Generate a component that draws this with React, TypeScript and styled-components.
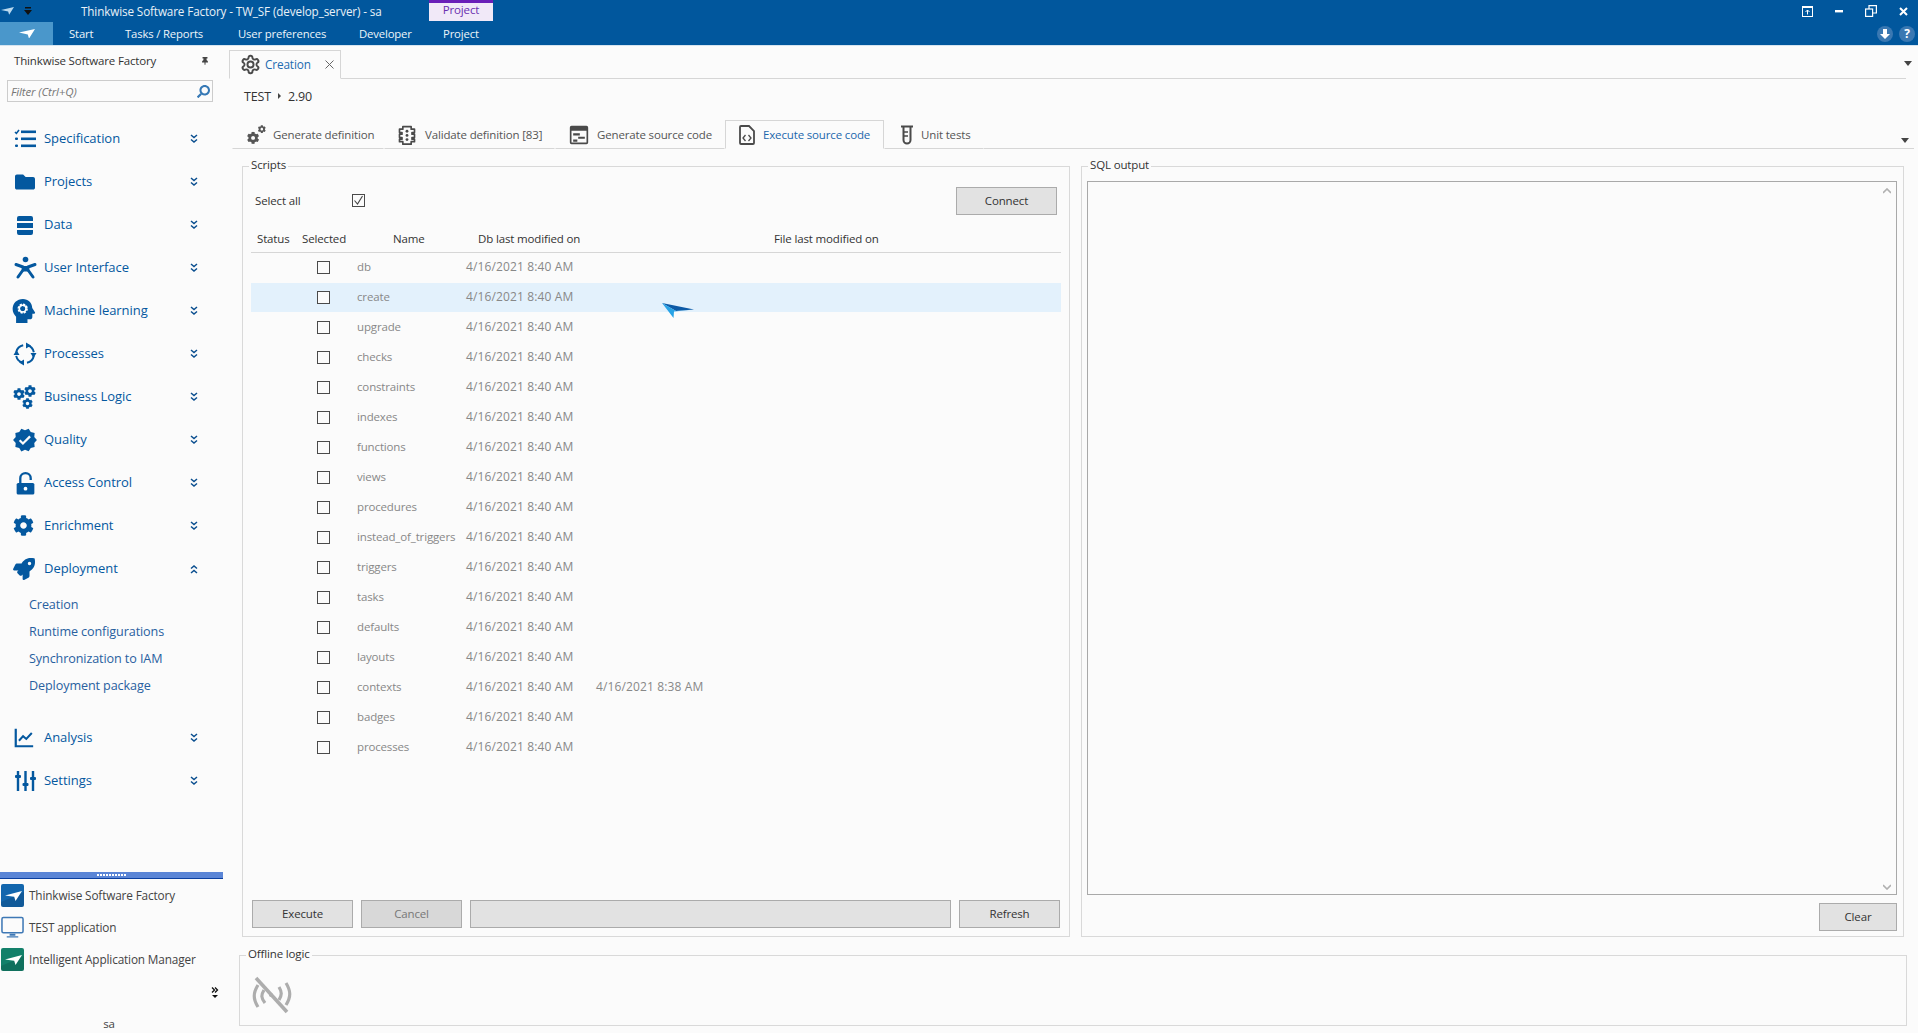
import React from "react";
import styled, { createGlobalStyle } from "styled-components";
import { FaCog, FaFolder, FaRocket, FaSearch, FaThumbtack } from "react-icons/fa";
import { MdVerified } from "react-icons/md";

const UI = `"Open Sans", "Noto Sans", "Liberation Sans", sans-serif`;
const BLUE = "#01579d";
const NAVY = "#04589f";

const Global = createGlobalStyle`
  html, body { margin: 0; padding: 0; background: #fbfbfb; overflow: hidden; }
  * { box-sizing: border-box; }
`;

const Shell = styled.div`
  width: 1918px; height: 1033px; display: flex; flex-direction: column;
  background: #fbfbfb; font-family: ${UI}; font-size: 11.5px; letter-spacing: -0.15px; color: #333;
`;
const TitleBar = styled.header`
  height: 46px; flex: none; background: ${BLUE}; border-bottom: 1px solid #d5e4f0; color: #fff;
  display: flex; flex-direction: column;
`;
const TopRow = styled.div`height: 22px; display: flex; align-items: stretch;`;
const QuickTools = styled.div`
  width: 81px; flex: none; display: flex; align-items: center; gap: 10px; padding-left: 1px;
`;
const TitleText = styled.div`
  width: 348px; flex: none; line-height: 22px; color: #e8f1f8; white-space: nowrap; font-size: 11.7px; letter-spacing: -0.12px;
`;
const ContextTab = styled.div`
  width: 64px; height: 21px; flex: none; background: #f1e9f8; border-top: 3px solid #6a1fb8; color: #6a2fb0;
  text-align: center; line-height: 14px;
`;
const WindowButtons = styled.div`margin: 0 -1px 0 auto; display: flex;`;
const WindowBtn = styled.div`width: 32px; display: flex; align-items: center; justify-content: center;`;
const MenuRow = styled.nav`height: 23px; display: flex; align-items: center;`;
const AppButton = styled.div`
  width: 53px; height: 100%; background: #4a97cb; display: flex; align-items: center; justify-content: center; margin-right: 16px;
`;
const MenuItem = styled.div<{ $w: number }>`
  width: ${(p) => p.$w}px; flex: none; color: #eef5fa; white-space: nowrap; font-size: 11.3px;
`;
const RoundButtons = styled.div`margin-left: auto; display: flex; gap: 6px; padding-right: 3px;`;
const RoundBtn = styled.div`
  width: 16px; height: 16px; border-radius: 50%; background: #3a78b2; display: flex; align-items: center;
  justify-content: center; color: #fff; font-weight: 700; font-size: 12px; letter-spacing: 0;
`;

const Body = styled.div`flex: 1; min-height: 0; display: flex;`;
const Sidebar = styled.aside`width: 229px; flex: none; display: flex; flex-direction: column;`;
const SideHeader = styled.div`
  height: 31px; flex: none; display: flex; align-items: center; justify-content: space-between;
  padding: 0 20px 2px 14px; color: #333;
`;
const Filter = styled.div`
  margin: 3px 0 0 7px; width: 206px; height: 22px; flex: none; border: 1px solid #ccc; background: #fbfbfb;
  display: flex; align-items: center; justify-content: space-between; padding: 0 2px 0 3px;
  font-style: italic; color: #777;
`;
const SearchGlyph = styled.span`display: flex; transform: scaleX(-1);`;
const Nav = styled.div`margin-top: 15px; display: flex; flex-direction: column;`;
const NavRow = styled.div`
  height: 43px; display: flex; align-items: center; color: ${NAVY}; font-size: 13px; font-weight: 500; letter-spacing: -0.05px;
`;
const NavIconBox = styled.span`
  width: 44px; padding-left: 13px; flex: none; display: flex; align-items: center; color: ${NAVY};
`;
const NavLabel = styled.span`width: 146px; flex: none; padding-bottom: 1px;`;
const SubList = styled.div`margin-top: 1px; display: flex; flex-direction: column;`;
const SubRow = styled.div`
  height: 27px; display: flex; align-items: center; padding-left: 29px; color: #28609f; font-size: 12.6px; letter-spacing: -0.1px;
`;
const NavGap = styled.div`height: 17px;`;
const SideBottom = styled.div`margin-top: auto; display: flex; flex-direction: column;`;
const Splitter = styled.div`
  width: 223px; height: 7px; background: #5a85d6; border-bottom: 1px solid #0a3fa0; display: flex;
  align-items: center; justify-content: center; gap: 1px;
`;
const SplitDot = styled.i`width: 2px; height: 2px; background: #fff; display: block;`;
const LaunchRow = styled.div`
  height: 32px; display: flex; align-items: center; padding-left: 1px; color: #444; gap: 5px; font-size: 11.8px;
`;
const Overflow = styled.div`height: 34px; display: flex; justify-content: flex-end; align-items: center; padding-right: 10px;`;
const UserName = styled.div`height: 24px; padding-top: 7px; line-height: 16px; text-align: center; width: 218px; color: #444;`;

const Main = styled.main`flex: 1; min-width: 0; display: flex; flex-direction: column;`;
const DocBar = styled.div`
  height: 33px; flex: none; margin-right: 12px; border-bottom: 1px solid #d6d6d6; display: flex; align-items: flex-end;
  position: relative;
`;
const DocTab = styled.div`
  width: 112px; height: 29px; margin-bottom: -1px; background: #fbfbfb; border: 1px solid #d6d6d6; border-bottom-color: #fbfbfb;
  display: flex; align-items: center; padding-left: 10px; gap: 4px; color: #1d6bb0; font-size: 11.8px;
`;
const DocLabel = styled.span`padding-bottom: 2px;`;
const DocClose = styled.span`margin-left: 10px; display: flex; color: #666;`;
const Caret = styled.span<{ $r: number; $b: number }>`
  position: absolute; right: ${(p) => p.$r}px; bottom: ${(p) => p.$b}px; width: 0; height: 0;
  border-left: 4px solid transparent; border-right: 4px solid transparent; border-top: 5px solid #444;
`;
const Crumb = styled.div`
  height: 35px; flex: none; display: flex; align-items: center; padding: 0 0 1px 15px; gap: 7px; color: #333; font-size: 12.5px;
`;
const CrumbArrow = styled.span`
  width: 0; height: 0; border-top: 3px solid transparent; border-bottom: 3px solid transparent; border-left: 3px solid #444;
`;
const SubTabs = styled.div`
  height: 35px; flex: none; margin: 0 4px 0 3px; border-bottom: 1px solid #d6d6d6; display: flex; align-items: flex-end; position: relative;
`;
const SubTab = styled.div<{ $w: number; $active?: boolean; $pad?: number; $gap?: number }>`
  width: ${(p) => p.$w}px; height: 29px; flex: none; display: flex; align-items: center; gap: ${(p) => p.$gap ?? 8}px;
  padding-left: ${(p) => p.$pad ?? 13}px; color: ${(p) => (p.$active ? "#1c68ad" : "#555")};
  margin-bottom: -1px; background: #fbfbfb; white-space: nowrap;
  border: 1px solid ${(p) => (p.$active ? "#d6d6d6" : "transparent")};
  border-bottom: 1px solid ${(p) => (p.$active ? "#fbfbfb" : "#d6d6d6")};
`;
const Groups = styled.div`
  flex: 1; min-height: 0; margin: 9px 0 0 13px; display: flex; gap: 11px;
`;
const Group = styled.fieldset<{ $w: number }>`
  margin: 0; padding: 0; min-width: 0; width: ${(p) => p.$w}px; flex: none; border: 1px solid #d9d9d9;
  display: flex; flex-direction: column;
`;
const Legend = styled.legend`
  margin-left: 6px; padding: 0 2px 2px; line-height: 14px; color: #333; font-size: 11.5px;
`;
const SelectBar = styled.div`
  height: 28px; margin: 13px 12px 0 12px; display: flex; align-items: center;
`;
const SelectLabel = styled.span`width: 97px; flex: none; color: #333; padding-bottom: 2px;`;
const Check = styled.span`
  width: 13px; height: 13px; flex: none; border: 1px solid #4a4a4a; background: #fbfbfb; display: flex;
  align-items: center; justify-content: center;
`;
const SelectAllCheck = styled(Check)`margin-bottom: 2px;`;
const Button = styled.div<{ $w?: number; $off?: boolean; $grow?: boolean }>`
  ${(p) => (p.$w ? `width: ${p.$w}px;` : "")} ${(p) => (p.$grow ? "flex: 1;" : "flex: none;")}
  height: 28px; border: 1px solid #ababab; background: ${(p) => (p.$off ? "#d8d8d8" : "#e2e2e2")}; padding-bottom: 2px;
  color: ${(p) => (p.$off ? "#777" : "#333")}; display: flex; align-items: center; justify-content: center;
`;
const ConnectSlot = styled.div`margin-left: auto;`;
const Table = styled.div`margin: 11px 8px 0 8px; display: flex; flex-direction: column;`;
const GRID = "45px 55px 110px 130px 1fr";
const HeadRow = styled.div`
  height: 27px; display: grid; grid-template-columns: ${GRID}; align-items: center; border-bottom: 1px solid #d6d6d6; color: #333;
  padding-bottom: 2px;
`;
const HeadCell = styled.span<{ $pad: number }>`padding-left: ${(p) => p.$pad}px; white-space: nowrap;`;
const Row = styled.div<{ $hover?: boolean }>`
  height: 30px; display: grid; grid-template-columns: ${GRID}; align-items: center; color: #888; position: relative;
  padding-bottom: 1px; background-clip: content-box; background-color: ${(p) => (p.$hover ? "#e3f1fc" : "transparent")};
`;
const CheckCell = styled.span`display: flex; justify-content: center;`;
const TextCell = styled.span`padding: 0 0 2px 6px; white-space: nowrap;`;
const DateCell = styled(TextCell)`padding-left: 5px; font-size: 12px; letter-spacing: 0.13px;`;
const Cursor = styled.svg`position: absolute; left: 411px; top: 20px;`;
const ScriptActions = styled.div`margin: auto 9px 8px 9px; display: flex; gap: 8px;`;
const SqlBody = styled.div`flex: 1; min-height: 0; margin: 7px 6px 5px 5px; display: flex; flex-direction: column;`;
const SqlArea = styled.div`flex: 1; border: 1px solid #a9a9a9; position: relative; margin-bottom: 8px;`;
const ScrollMark = styled.svg<{ $bottom?: boolean }>`
  position: absolute; right: 5px; ${(p) => (p.$bottom ? "bottom: 4px;" : "top: 6px;")}
`;
const ClearSlot = styled.div`display: flex; justify-content: flex-end;`;
const OfflineWrap = styled.div`margin: 10px 0 7px 10px;`;
const OfflineBox = styled.fieldset`
  margin: 0; padding: 12px 0 0 0; height: 79px; width: 1668px; min-width: 0; border: 1px solid #d9d9d9; display: block;
`;
const OfflineIcon = styled.div`margin-left: 11px; display: flex;`;
const IconSlot = styled.span<{ $m?: string }>`display: flex; margin: ${(p) => p.$m ?? "0"};`;

const Ico = ({ children, w = 24, h = 24 }: { children: React.ReactNode; w?: number; h?: number }) => (
  <svg width={w} height={h} viewBox="0 0 24 24" fill="currentColor">{children}</svg>
);

const Icons: Record<string, React.ReactNode> = {
  spec: (
    <Ico>
      <rect x="8" y="3.5" width="15" height="2.6" />
      <rect x="8" y="10.5" width="15" height="2.6" />
      <rect x="8" y="17.5" width="15" height="2.6" />
      <path d="M2 5l1.4 1.4L6 3" fill="none" stroke="currentColor" strokeWidth="1.6" />
      <rect x="2" y="10.5" width="3" height="2.6" rx="1" />
      <rect x="2" y="17.5" width="3" height="2.6" rx="1" />
    </Ico>
  ),
  folder: <IconSlot $m="0 0 0 2px"><FaFolder size={20} /></IconSlot>,
  data: (
    <Ico>
      <path d="M4 5a2 2 0 0 1 2-2h12a2 2 0 0 1 2 2v3H4zM4 10h16v5H4zM4 17h16v3a2 2 0 0 1-2 2H6a2 2 0 0 1-2-2z" />
    </Ico>
  ),
  ui: (
    <Ico>
      <circle cx="12.5" cy="3.500" r="2.800" />
      <path d="M3 8.500l7 2.500v3l-5 7M22 8.500l-7 2.500v3l5 7" fill="none" stroke="currentColor" strokeWidth="3" strokeLinecap="round" strokeLinejoin="round" />
      <path d="M9.500 10h6v5.500h-6z" />
    </Ico>
  ),
  ml: (
    <IconSlot $m="0 -2px">
      <svg width="26" height="26" viewBox="0 0 24 24">
        <path fill="currentColor" d="M11 1C5.500 1 1.500 5 1.500 10.200c0 3.100 1.300 5.300 3.200 7V23h10.500v-3.300h2.300c1.300 0 2.200-.9 2.200-2.200v-3h1.600c.8 0 1.200-.8.800-1.400l-2.500-3.900C19.400 4.500 15.800 1 11 1z" />
        <circle cx="10.800" cy="9.800" r="3.600" fill="none" stroke="#fff" strokeWidth="2.4" strokeDasharray="1.800 1.000" />
        <circle cx="10.800" cy="9.800" r="3.100" fill="none" stroke="#fff" strokeWidth="1.300" />
      </svg>
    </IconSlot>
  ),
  proc: (
    <Ico>
      <circle cx="12" cy="12" r="9" fill="none" stroke="currentColor" strokeWidth="2" strokeDasharray="10 4.14" strokeDashoffset="-2" />
      <path d="M13 .5l5 3-5 3zM23.500 11l-3 5-3-5zM11 23.500l-5-3 5-3zM.5 13l3-5 3 5z" />
    </Ico>
  ),
  logic: (
    <Ico>
      <FaCog x="0" y="3" size={12} />
      <FaCog x="11" y="0" size={12} />
      <FaCog x="9" y="13" size={11} />
    </Ico>
  ),
  quality: <IconSlot $m="0 -1px"><MdVerified size={26} /></IconSlot>,
  lock: (
    <Ico w={25} h={26}>
      <path d="M5 12h14a1.500 1.500 0 0 1 1.500 1.500v8A1.500 1.500 0 0 1 19 23H5a1.500 1.500 0 0 1-1.500-1.500v-8A1.500 1.500 0 0 1 5 12z" />
      <path d="M7 12V7.500a5 5 0 0 1 10 0V9" fill="none" stroke="currentColor" strokeWidth="2.200" />
      <circle cx="12" cy="17.500" r="1.800" fill="#fff" />
    </Ico>
  ),
  gear: <IconSlot><FaCog size={21} /></IconSlot>,
  rocket: <IconSlot><FaRocket size={22} /></IconSlot>,
  chart: (
    <Ico w={22} h={22}>
      <path d="M3 2v19h19" fill="none" stroke="currentColor" strokeWidth="2.400" />
      <path d="M6.500 15l4.500-5 3.500 3 6-6.500" fill="none" stroke="currentColor" strokeWidth="2.200" />
    </Ico>
  ),
  sliders: (
    <Ico>
      <path d="M5 2v20M12.500 2v20M20 2v20" stroke="currentColor" strokeWidth="2.400" />
      <rect x="2" y="6" width="6" height="3" rx="1" />
      <rect x="9.500" y="14" width="6" height="3" rx="1" />
      <rect x="17" y="8" width="6" height="3" rx="1" />
    </Ico>
  ),
};

const ChevronSvg = styled.svg<{ $up?: boolean }>`${(p) => (p.$up ? "transform: rotate(180deg);" : "")}`;
const DoubleChevron = ({ up }: { up?: boolean }) => (
  <ChevronSvg $up={up} width="8" height="10" viewBox="0 0 8 10">
    <path d="M1 1l3 2.500L7 1M1 5.500L4 8l3-2.500" fill="none" stroke="#0a4e8f" strokeWidth="1.500" />
  </ChevronSvg>
);

const PlaneLogo = ({ size = 16, fill = "#fff" }: { size?: number; fill?: string }) => (
  <svg width={size} height={size * 0.6} viewBox="0 0 20 12">
    <path d="M0 4.500L20 0l-7.500 12-1.500-5z" fill={fill} />
  </svg>
);

const AppTile = ({ bg }: { bg: string }) => (
  <svg width="23" height="23" viewBox="0 0 23 23">
    <rect width="23" height="23" rx="2" fill={bg} />
    <path d="M0 18L23 8v13a2 2 0 0 1-2 2H2a2 2 0 0 1-2-2z" fill="#000" opacity="0.12" />
    <path d="M4 11.500L21 7l-6.500 10-1.300-4.300z" fill="#fff" />
  </svg>
);

const MonitorTile = () => (
  <svg width="23" height="23" viewBox="0 0 24 23">
    <rect x="1" y="1" width="22" height="16" rx="1.500" fill="none" stroke="#3e78b5" strokeWidth="1.600" />
    <path d="M9 18h6v2H9zM6 20.500h12V22H6z" fill="#3e78b5" />
  </svg>
);

const GrayGears = () => (
  <svg width="20" height="20" viewBox="0 0 24 24" fill="#4a4a4a">
    <FaCog x="1" y="8" size={15} />
    <FaCog x="14" y="0" size={10} />
  </svg>
);
const Validate = () => (
  <svg width="20" height="20" viewBox="0 0 24 24">
    <path d="M7 2h10v3h4v4h-3v2h3v4h-3v2h3v3h-4v3H7v-3H3v-3h3v-2H3v-4h3V9H3V5h4z" fill="none" stroke="#4a4a4a" strokeWidth="2" strokeLinejoin="round" />
    <circle cx="12" cy="7.500" r="1.700" fill="#4a4a4a" />
    <circle cx="12" cy="12.500" r="1.700" fill="#4a4a4a" />
    <circle cx="12" cy="17.500" r="1.700" fill="#4a4a4a" />
  </svg>
);
const SourceWin = () => (
  <svg width="20" height="20" viewBox="0 0 24 24" fill="#4a4a4a">
    <path fillRule="evenodd" d="M3 1h18a2 2 0 0 1 2 2v18a2 2 0 0 1-2 2H3a2 2 0 0 1-2-2V3a2 2 0 0 1 2-2zm0 6v14h18V7z" />
    <path d="M5 10h8v2.500H5zM11 14h8v2.500h-8zM5 17.500h5V20H5z" />
  </svg>
);
const FileCode = () => (
  <svg width="16" height="20" viewBox="0 0 16 20" fill="none" stroke="#4a4a4a" strokeWidth="1.800">
    <path d="M2 1h8l5 5v12a1 1 0 0 1-1 1H2a1 1 0 0 1-1-1V2a1 1 0 0 1 1-1z" />
    <path d="M6.500 10L4 13l2.500 3M9.500 10L12 13l-2.500 3" strokeWidth="1.300" />
  </svg>
);
const TestTube = () => (
  <svg width="12" height="20" viewBox="0 0 12 20" fill="none" stroke="#4a4a4a" strokeWidth="2">
    <path d="M0 1.500h12M2.500 1.500V15a3.500 3.500 0 0 0 7 0V1.500" />
    <path d="M3 7h4M3 11h4" strokeWidth="1.600" />
  </svg>
);
const CreationGear = () => (
  <svg width="21" height="21" viewBox="0 0 24 24" fill="none" stroke="#4a4a4a" strokeWidth="2.200" strokeLinecap="round" strokeLinejoin="round">
    <path d="M12.220 2h-.44a2 2 0 0 0-2 2v.18a2 2 0 0 1-1 1.730l-.43.250a2 2 0 0 1-2 0l-.15-.080a2 2 0 0 0-2.730.730l-.22.380a2 2 0 0 0 .730 2.730l.15.100a2 2 0 0 1 1 1.720v.510a2 2 0 0 1-1 1.740l-.15.090a2 2 0 0 0-.730 2.730l.22.380a2 2 0 0 0 2.730.730l.15-.080a2 2 0 0 1 2 0l.43.250a2 2 0 0 1 1 1.730V20a2 2 0 0 0 2 2h.44a2 2 0 0 0 2-2v-.18a2 2 0 0 1 1-1.730l.43-.250a2 2 0 0 1 2 0l.15.080a2 2 0 0 0 2.730-.730l.22-.390a2 2 0 0 0-.730-2.730l-.15-.080a2 2 0 0 1-1-1.740v-.500a2 2 0 0 1 1-1.740l.15-.090a2 2 0 0 0 .730-2.730l-.22-.380a2 2 0 0 0-2.730-.730l-.15.080a2 2 0 0 1-2 0l-.43-.250a2 2 0 0 1-1-1.730V4a2 2 0 0 0-2-2z" />
    <circle cx="12" cy="12" r="3.500" />
  </svg>
);
const NoSignal = () => (
  <svg width="42" height="40" viewBox="0 0 42 40" fill="none" stroke="#adadad" strokeWidth="3.200">
    <path d="M5 3l31 34" strokeWidth="3.600" />
    <path d="M7 10c-5 8-5 14 0 22M13 15c-3 5-3 8 1 13M35 8c5 8 5 14 0 22M28 12c3 5 3 8 0 13" />
    <circle cx="20" cy="20" r="2" fill="#adadad" stroke="none" />
  </svg>
);

const navTop = [
  ["spec", "Specification"], ["folder", "Projects"], ["data", "Data"], ["ui", "User Interface"],
  ["ml", "Machine learning"], ["proc", "Processes"], ["logic", "Business Logic"], ["quality", "Quality"],
  ["lock", "Access Control"], ["gear", "Enrichment"],
];
const scripts = [
  "db", "create", "upgrade", "checks", "constraints", "indexes", "functions", "views", "procedures",
  "instead_of_triggers", "triggers", "tasks", "defaults", "layouts", "contexts", "badges", "processes",
];

const NavItem = ({ icon, label, up }: { icon: string; label: string; up?: boolean }) => (
  <NavRow>
    <NavIconBox>{Icons[icon]}</NavIconBox>
    <NavLabel>{label}</NavLabel>
    <DoubleChevron up={up} />
  </NavRow>
);

export default function App() {
  return (
    <Shell>
      <Global />
      <TitleBar>
        <TopRow>
          <QuickTools>
            <PlaneLogo size={13} fill="#b9d8ee" />
            <svg width="8" height="8" viewBox="0 0 8 8" fill="#111"><path d="M1 0h6v1.500H1zM0 3h8L4 8z" /></svg>
          </QuickTools>
          <TitleText>Thinkwise Software Factory - TW_SF (develop_server) - sa</TitleText>
          <ContextTab>Project</ContextTab>
          <WindowButtons>
            <WindowBtn>
              <svg width="11" height="11" viewBox="0 0 11 11" fill="none" stroke="#fff"><rect x=".5" y=".5" width="10" height="10" /><path d="M.5 1.500h10M5.500 8.500V4M3.500 6l2-2 2 2" /></svg>
            </WindowBtn>
            <WindowBtn><svg width="8" height="3" viewBox="0 0 8 3"><rect width="8" height="2.400" fill="#fff" /></svg></WindowBtn>
            <WindowBtn>
              <svg width="12" height="12" viewBox="0 0 12 12" fill="none" stroke="#fff" strokeWidth="1.200"><rect x=".6" y="4" width="7" height="7.400" /><path d="M4 4V.6h7.400V8H7.600" /></svg>
            </WindowBtn>
            <WindowBtn>
              <svg width="9" height="9" viewBox="0 0 9 9" stroke="#fff" strokeWidth="2"><path d="M1 1l7 7M8 1L1 8" /></svg>
            </WindowBtn>
          </WindowButtons>
        </TopRow>
        <MenuRow>
          <AppButton><PlaneLogo size={16} /></AppButton>
          <MenuItem $w={56}>Start</MenuItem>
          <MenuItem $w={113}>Tasks / Reports</MenuItem>
          <MenuItem $w={121}>User preferences</MenuItem>
          <MenuItem $w={84}>Developer</MenuItem>
          <MenuItem $w={50}>Project</MenuItem>
          <RoundButtons>
            <RoundBtn>
              <svg width="10" height="10" viewBox="0 0 10 10" fill="#fff"><path d="M3 0h4v5h3L5 10 0 5h3z" /></svg>
            </RoundBtn>
            <RoundBtn>?</RoundBtn>
          </RoundButtons>
        </MenuRow>
      </TitleBar>
      <Body>
        <Sidebar>
          <SideHeader>
            <span>Thinkwise Software Factory</span>
            <FaThumbtack size={8} color="#444" />
          </SideHeader>
          <Filter>
            <span>Filter (Ctrl+Q)</span>
            <SearchGlyph><FaSearch size={13} color="#3578b5" /></SearchGlyph>
          </Filter>
          <Nav>
            {navTop.map(([i, l]) => <NavItem key={l} icon={i} label={l} />)}
            <NavItem icon="rocket" label="Deployment" up />
            <SubList>
              <SubRow>Creation</SubRow>
              <SubRow>Runtime configurations</SubRow>
              <SubRow>Synchronization to IAM</SubRow>
              <SubRow>Deployment package</SubRow>
            </SubList>
            <NavGap />
            <NavItem icon="chart" label="Analysis" />
            <NavItem icon="sliders" label="Settings" />
          </Nav>
          <SideBottom>
            <Splitter>{Array.from({ length: 10 }, (_, i) => <SplitDot key={i} />)}</Splitter>
            <LaunchRow><AppTile bg="#1366ad" />Thinkwise Software Factory</LaunchRow>
            <LaunchRow><MonitorTile />TEST application</LaunchRow>
            <LaunchRow><AppTile bg="#13806a" />Intelligent Application Manager</LaunchRow>
            <Overflow>
              <svg width="8" height="11" viewBox="0 0 8 11" fill="none" stroke="#111" strokeWidth="1.300"><path d="M1 .5l2.500 2.500L1 5.500M4 .5l2.500 2.500L4 5.500" /><path d="M1 8h6L4 11z" fill="#111" stroke="none" /></svg>
            </Overflow>
            <UserName>sa</UserName>
          </SideBottom>
        </Sidebar>
        <Main>
          <DocBar>
            <DocTab>
              <CreationGear />
              <DocLabel>Creation</DocLabel>
              <DocClose>
                <svg width="9" height="9" viewBox="0 0 9 9" stroke="#666" strokeWidth="1"><path d="M.5.5l8 8M8.500.5l-8 8" /></svg>
              </DocClose>
            </DocTab>
            <Caret $r={-6} $b={12} />
          </DocBar>
          <Crumb>
            <span>TEST</span><CrumbArrow /><span>2.90</span>
          </Crumb>
          <SubTabs>
            <SubTab $w={152} $gap={7}><GrayGears />Generate definition</SubTab>
            <SubTab $w={171} $pad={12}><Validate />Validate definition [83]</SubTab>
            <SubTab $w={170}><SourceWin />Generate source code</SubTab>
            <SubTab $w={159} $active><FileCode />Execute source code</SubTab>
            <SubTab $w={100} $pad={16}><TestTube />Unit tests</SubTab>
            <Caret $r={5} $b={5} />
          </SubTabs>
          <Groups>
            <Group $w={828}>
              <Legend>Scripts</Legend>
              <SelectBar>
                <SelectLabel>Select all</SelectLabel>
                <SelectAllCheck>
                  <svg width="11" height="11" viewBox="0 0 11 11" fill="none" stroke="#444" strokeWidth="1.100"><path d="M1.500 5.500l3 3.500 5-8" /></svg>
                </SelectAllCheck>
                <ConnectSlot><Button $w={101}>Connect</Button></ConnectSlot>
              </SelectBar>
              <Table>
                <HeadRow>
                  <HeadCell $pad={6}>Status</HeadCell>
                  <HeadCell $pad={6}>Selected</HeadCell>
                  <HeadCell $pad={42}>Name</HeadCell>
                  <HeadCell $pad={17}>Db last modified on</HeadCell>
                  <HeadCell $pad={183}>File last modified on</HeadCell>
                </HeadRow>
                {scripts.map((s) => (
                  <Row key={s} $hover={s === "create"}>
                    <span />
                    <CheckCell><Check /></CheckCell>
                    <TextCell>{s}</TextCell>
                    <DateCell>4/16/2021 8:40 AM</DateCell>
                    <DateCell>{s === "contexts" ? "4/16/2021 8:38 AM" : ""}</DateCell>
                    {s === "create" && (
                      <Cursor width="32" height="15" viewBox="0 0 32 15">
                        <path d="M0 0l32 6.500-18 1.500z" fill="#0d5aa6" />
                        <path d="M0 0l14 8 18-1.500-20 2-.5 6.500z" fill="#28a3e6" />
                      </Cursor>
                    )}
                  </Row>
                ))}
              </Table>
              <ScriptActions>
                <Button $w={101}>Execute</Button>
                <Button $w={101} $off>Cancel</Button>
                <Button $grow />
                <Button $w={101}>Refresh</Button>
              </ScriptActions>
            </Group>
            <Group $w={823}>
              <Legend>SQL output</Legend>
              <SqlBody>
                <SqlArea>
                  <ScrollMark width="8" height="6" viewBox="0 0 8 6"><path d="M0 5l4-4 4 4" fill="none" stroke="#b0b0b0" strokeWidth="1.600" /></ScrollMark>
                  <ScrollMark $bottom width="8" height="6" viewBox="0 0 8 6"><path d="M0 1l4 4 4-4" fill="none" stroke="#b0b0b0" strokeWidth="1.600" /></ScrollMark>
                </SqlArea>
                <ClearSlot><Button $w={78}>Clear</Button></ClearSlot>
              </SqlBody>
            </Group>
          </Groups>
          <OfflineWrap>
            <OfflineBox>
              <Legend>Offline logic</Legend>
              <OfflineIcon><NoSignal /></OfflineIcon>
            </OfflineBox>
          </OfflineWrap>
        </Main>
      </Body>
    </Shell>
  );
}
